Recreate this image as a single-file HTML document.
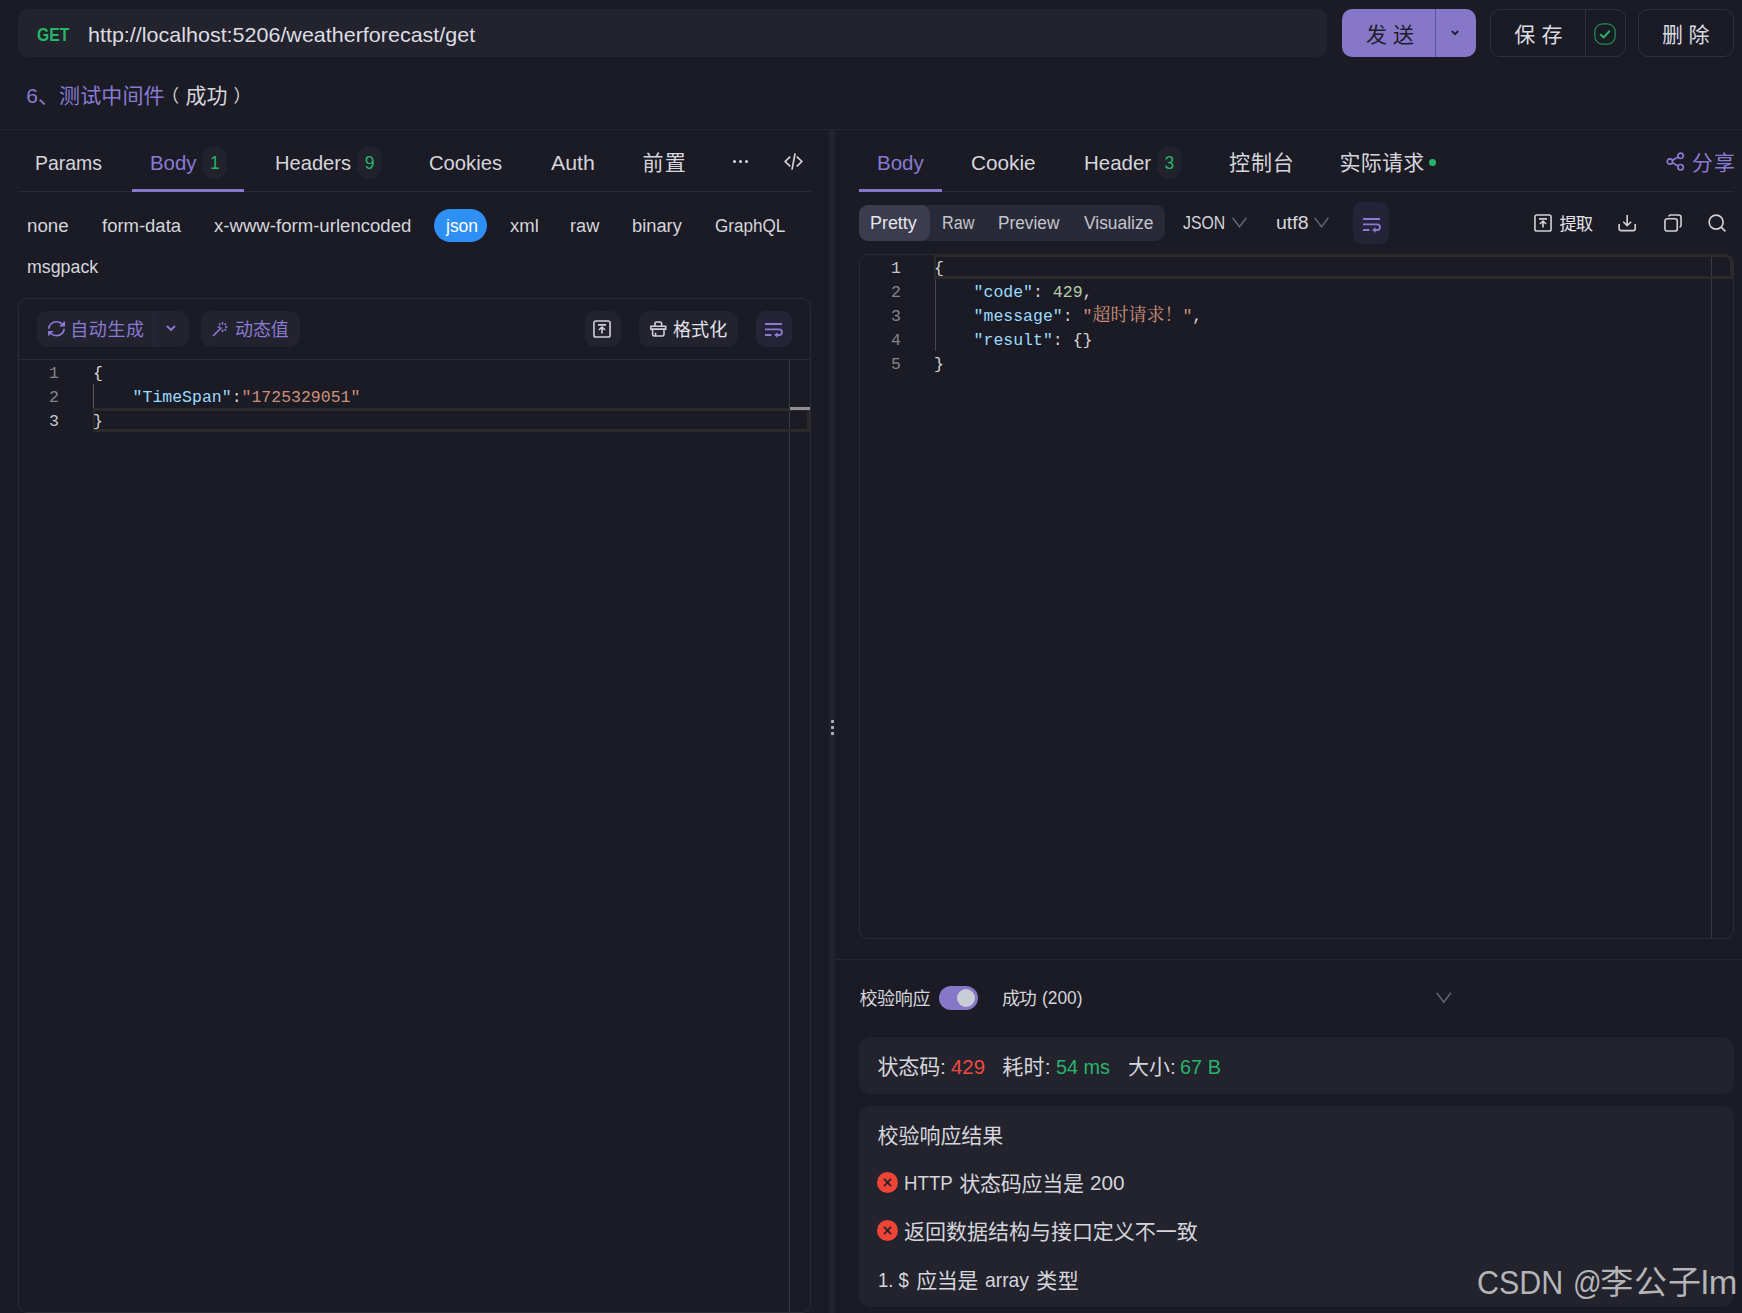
<!DOCTYPE html>
<html lang="zh-CN"><head><meta charset="utf-8"><title>Apifox</title>
<style>
html,body{margin:0;padding:0;background:#1b1b25;}
body{width:1742px;height:1313px;position:relative;overflow:hidden;font-family:"Liberation Sans", "Noto Sans CJK SC", sans-serif;}
.t{position:absolute;white-space:pre;transform-origin:0 0;}
.b{position:absolute;box-sizing:border-box;}
.c{position:absolute;white-space:pre;font-family:"Liberation Mono", "Noto Serif CJK SC", monospace;font-size:16.5px;line-height:24px;height:24px;color:#d4d4d4;}
svg{position:absolute;overflow:visible;}
</style></head><body>
<!-- top bar -->
<div class="b" style="left:18px;top:9px;width:1309px;height:48px;border-radius:9px;background:#23232e;"></div>
<div class="b" style="left:1342px;top:9px;width:134px;height:48px;border-radius:10px;background:#8777c9;"></div>
<div class="b" style="left:1435px;top:9px;width:1px;height:48px;background:#5f5399;"></div>
<svg style="left:1451px;top:30px;" width="8" height="6" viewBox="0 0 8 6"><path d="M0.8 1 L4 4.2 L7.2 1" fill="none" stroke="#1e1e2a" stroke-width="1.8"/></svg>
<div class="b" style="left:1490px;top:9px;width:136px;height:48px;border-radius:10px;border:1px solid #30303c;"></div>
<div class="b" style="left:1585px;top:10px;width:1px;height:46px;background:#30303c;"></div>
<svg style="left:1594px;top:23px;" width="22" height="22" viewBox="0 0 22 22"><rect x="0.8" y="0.8" width="20.4" height="20.4" rx="8" fill="none" stroke="#1f9150" stroke-width="1.2"/><path d="M6.2 11.2 L9.6 14.4 L15.8 7.8" fill="none" stroke="#27b56b" stroke-width="2"/></svg>
<div class="b" style="left:1638px;top:9px;width:96px;height:48px;border-radius:10px;border:1px solid #30303c;"></div>
<!-- header line -->
<div class="b" style="left:0;top:129px;width:1742px;height:1px;background:#24242e;"></div>
<!-- splitter -->
<div class="b" style="left:829px;top:130px;width:6px;height:1183px;background:#23232e;"></div>
<div class="b" style="left:831px;top:720px;width:3px;height:3px;border-radius:1px;background:#b4b4bc;"></div>
<div class="b" style="left:831px;top:726px;width:3px;height:3px;border-radius:1px;background:#b4b4bc;"></div>
<div class="b" style="left:831px;top:732px;width:3px;height:3px;border-radius:1px;background:#b4b4bc;"></div>

<!-- left tabs -->
<div class="b" style="left:18px;top:191px;width:793px;height:1px;background:#2a2a36;"></div>
<div class="b" style="left:132px;top:189px;width:112px;height:3px;background:#8777c9;"></div>
<div class="b" style="left:203px;top:146px;width:24px;height:33px;border-radius:12px;background:#22222c;"></div>
<div class="b" style="left:357px;top:146px;width:24px;height:33px;border-radius:12px;background:#22222c;"></div>
<div class="b" style="left:732.6px;top:159.8px;width:3.4px;height:3.4px;border-radius:1.5px;background:#d9d9df;"></div>
<div class="b" style="left:738.7px;top:159.8px;width:3.4px;height:3.4px;border-radius:1.5px;background:#d9d9df;"></div>
<div class="b" style="left:744.8px;top:159.8px;width:3.4px;height:3.4px;border-radius:1.5px;background:#d9d9df;"></div>
<svg style="left:783px;top:152px;" width="22" height="19" viewBox="0 0 22 19"><path d="M7.2 4.6 L2.2 9.5 L7.2 14.4 M13.8 4.6 L18.8 9.5 L13.8 14.4 M12.1 1.4 L9 17.6" fill="none" stroke="#d4d4da" stroke-width="1.7"/></svg>
<!-- json pill -->
<div class="b" style="left:434px;top:209px;width:53px;height:33px;border-radius:17px;background:#2e8ff5;"></div>

<!-- left editor box -->
<div class="b" style="left:18px;top:298px;width:793px;height:1015px;border-radius:9px;border:1px solid #2b2b34;"></div>
<div class="b" style="left:19px;top:359px;width:791px;height:1px;background:#2a2a36;"></div>
<div class="b" style="left:37px;top:311px;width:152px;height:36px;border-radius:10px;background:#23232f;"></div>
<div class="b" style="left:153px;top:311px;width:1px;height:36px;background:#2b2940;"></div>
<div class="b" style="left:201px;top:311px;width:99px;height:36px;border-radius:10px;background:#23232f;"></div>
<div class="b" style="left:585px;top:311px;width:36px;height:36px;border-radius:10px;background:#23232f;"></div>
<div class="b" style="left:639px;top:311px;width:99px;height:36px;border-radius:10px;background:#23232f;"></div>
<div class="b" style="left:756px;top:311px;width:36px;height:36px;border-radius:10px;background:#252338;"></div>
<!-- refresh icon -->
<svg style="left:48.4px;top:321.3px;" width="17" height="15.4" viewBox="2 2 20 20" preserveAspectRatio="none"><path d="M3 12a9 9 0 0 1 9-9 9.75 9.75 0 0 1 6.74 2.74L21 8 M21 3v5h-5 M21 12a9 9 0 0 1-9 9 9.75 9.75 0 0 1-6.74-2.74L3 16 M8 16H3v5" fill="none" stroke="#897ad2" stroke-width="2.1"/></svg>
<svg style="left:166px;top:325px;" width="10" height="7" viewBox="0 0 10 7"><path d="M1 1 L5 5 L9 1" fill="none" stroke="#897ad2" stroke-width="1.8"/></svg>
<!-- wand icon -->
<svg style="left:212px;top:321px;" width="16" height="16" viewBox="0 0 16 16"><path d="M1 15 L9.5 6.5 M10.5 1 V3.4 M10.5 8.6 V11 M5.6 6 H8 M13 6 H15.4 M7 2.5 L8.4 3.9 M12.6 8.1 L14 9.5 M14 2.5 L12.6 3.9" fill="none" stroke="#897ad2" stroke-width="1.6"/></svg>
<!-- upload icon -->
<svg style="left:593.4px;top:319.8px;" width="18" height="18" viewBox="0 0 19 19"><rect x="1" y="1" width="17" height="17" rx="2" fill="none" stroke="#d0d0d6" stroke-width="1.7"/><path d="M5.2 5.2 H13.8 M9.5 14.2 V7.6 M6.2 10.6 L9.5 7.4 L12.8 10.6" fill="none" stroke="#d0d0d6" stroke-width="1.7"/></svg>
<!-- format icon -->
<svg style="left:649.6px;top:321.4px;" width="16.6" height="16" viewBox="0 0 18 17" preserveAspectRatio="none"><path d="M5.4 5.4 V2.6 Q5.4 1 7 1 H11 Q12.6 1 12.6 2.6 V5.4 M1 5.6 H17 V8.6 H1 Z M2.8 8.8 V14.4 Q2.8 16 4.4 16 H13.6 Q15.2 16 15.2 14.4 V8.8 M6 16 V12.6" fill="none" stroke="#d0d0d6" stroke-width="1.7"/></svg>
<!-- wrap icon -->
<svg style="left:764px;top:322px;" width="19" height="16" viewBox="0 0 19 16"><path d="M1 2 H18 M1 7.4 H15 Q18 7.4 18 10.2 Q18 13 15 13 H11.6 M1 13 H7.4" fill="none" stroke="#897ad2" stroke-width="1.8"/><path d="M13.6 10.2 L10 13 L13.6 15.8 Z" fill="#897ad2"/></svg>

<!-- left code -->
<div class="b" style="left:789px;top:360px;width:1px;height:951px;background:#38383f;"></div>
<div class="b" style="left:93px;top:408px;width:717px;height:24px;border:3px solid #2a2a2a;border-left-width:2px;"></div>
<div class="b" style="left:93px;top:384px;width:1px;height:24px;background:#5a5a5f;"></div>
<div class="b" style="left:790px;top:407px;width:20px;height:3px;background:#8f8f94;"></div>
<span class="c" style="left:28px;top:362px;width:31px;text-align:right;color:#858585;">1</span>
<span class="c" style="left:28px;top:386px;width:31px;text-align:right;color:#858585;">2</span>
<span class="c" style="left:28px;top:410px;width:31px;text-align:right;color:#c6c6c6;">3</span>
<span class="c" style="left:93px;top:362px;">{</span>
<span class="c" style="left:93px;top:386px;">    <span style="color:#9cdcfe">"TimeSpan"</span>:<span style="color:#ce9178">"1725329051"</span></span>
<span class="c" style="left:93px;top:410px;">}</span>

<!-- right tabs -->
<div class="b" style="left:859px;top:191px;width:875px;height:1px;background:#2a2a36;"></div>
<div class="b" style="left:859px;top:189px;width:83px;height:3px;background:#8777c9;"></div>
<div class="b" style="left:1157px;top:146px;width:24px;height:33px;border-radius:12px;background:#22222c;"></div>
<div class="b" style="left:1429px;top:158.5px;width:7px;height:7px;border-radius:4px;background:#27b56b;"></div>
<!-- share icon -->
<svg style="left:1666px;top:152px;" width="19" height="19" viewBox="0 0 19 19"><circle cx="14.6" cy="3.8" r="2.7" fill="none" stroke="#897ad2" stroke-width="1.7"/><circle cx="3.9" cy="9.5" r="2.7" fill="none" stroke="#897ad2" stroke-width="1.7"/><circle cx="14.6" cy="15.2" r="2.7" fill="none" stroke="#897ad2" stroke-width="1.7"/><path d="M6.3 8.2 L12.2 5.1 M6.3 10.8 L12.2 13.9" fill="none" stroke="#897ad2" stroke-width="1.7"/></svg>

<!-- segmented -->
<div class="b" style="left:859px;top:205px;width:306px;height:36px;border-radius:9px;background:#292a38;"></div>
<div class="b" style="left:859px;top:205px;width:71px;height:36px;border-radius:9px;background:#3b3c4e;"></div>
<svg style="left:1231.5px;top:217.3px;" width="15" height="11" viewBox="0 0 15 11"><path d="M0.6 0.8 L7.5 9.8 L14.4 0.8" fill="none" stroke="#62646f" stroke-width="1.5"/></svg>
<svg style="left:1314.4px;top:217.3px;" width="15" height="11" viewBox="0 0 15 11"><path d="M0.6 0.8 L7.5 9.8 L14.4 0.8" fill="none" stroke="#62646f" stroke-width="1.5"/></svg>
<div class="b" style="left:1353px;top:202px;width:36px;height:41.5px;border-radius:9px;background:#252338;"></div>
<svg style="left:1362px;top:216.5px;" width="19" height="16" viewBox="0 0 19 16"><path d="M1 2 H18 M1 7.4 H15 Q18 7.4 18 10.2 Q18 13 15 13 H11.6 M1 13 H7.4" fill="none" stroke="#897ad2" stroke-width="1.8"/><path d="M13.6 10.2 L10 13 L13.6 15.8 Z" fill="#897ad2"/></svg>
<!-- extract icon -->
<svg style="left:1533.6px;top:214.4px;" width="18" height="18" viewBox="0 0 19 19"><rect x="1" y="1" width="17" height="17" rx="2" fill="none" stroke="#d0d0d6" stroke-width="1.7"/><path d="M5.2 5.2 H13.8 M9.5 14.2 V7.6 M6.2 10.6 L9.5 7.4 L12.8 10.6" fill="none" stroke="#d0d0d6" stroke-width="1.7"/></svg>
<!-- download icon -->
<svg style="left:1618.2px;top:213.8px;" width="18.4" height="18" viewBox="0 0 19 19" preserveAspectRatio="none"><path d="M1.2 10.6 V15.4 Q1.2 17.6 3.4 17.6 H15.6 Q17.8 17.6 17.8 15.4 V10.6 M9.5 1 V12 M5.4 8.2 L9.5 12.2 L13.6 8.2" fill="none" stroke="#d0d0d6" stroke-width="1.7"/></svg>
<!-- copy icon -->
<svg style="left:1663.5px;top:213.6px;" width="18" height="18" viewBox="0 0 19 19"><rect x="1" y="5" width="13" height="13" rx="2.5" fill="none" stroke="#d0d0d6" stroke-width="1.7"/><path d="M5 2.6 Q5.4 1 7 1 H15.4 Q18 1 18 3.6 V12 Q18 13.6 16.4 14" fill="none" stroke="#d0d0d6" stroke-width="1.7"/></svg>
<!-- search icon -->
<svg style="left:1708.2px;top:213.6px;" width="18.4" height="18.4" viewBox="0 0 19 19"><circle cx="8.4" cy="8.4" r="7.2" fill="none" stroke="#d0d0d6" stroke-width="1.7"/><path d="M13.6 13.6 L18 18" fill="none" stroke="#d0d0d6" stroke-width="1.7"/></svg>

<!-- right editor -->
<div class="b" style="left:859px;top:254px;width:875px;height:685px;border-radius:9px;border:1px solid #2b2b34;"></div>
<div class="b" style="left:1711px;top:255px;width:1px;height:683px;background:#38383f;"></div>
<div class="b" style="left:934px;top:254px;width:799px;height:25px;border:3px solid #2a2a2a;border-left-width:2px;border-top-right-radius:9px;"></div>
<div class="b" style="left:934.5px;top:279px;width:1px;height:72px;background:#45454b;"></div>
<span class="c" style="left:870px;top:257px;width:31px;text-align:right;color:#c6c6c6;">1</span>
<span class="c" style="left:870px;top:281px;width:31px;text-align:right;color:#858585;">2</span>
<span class="c" style="left:870px;top:305px;width:31px;text-align:right;color:#858585;">3</span>
<span class="c" style="left:870px;top:329px;width:31px;text-align:right;color:#858585;">4</span>
<span class="c" style="left:870px;top:353px;width:31px;text-align:right;color:#858585;">5</span>
<span class="c" style="left:934px;top:257px;">{</span>
<span class="c" style="left:934px;top:281px;">    <span style="color:#9cdcfe">"code"</span>: <span style="color:#b5cea8">429</span>,</span>
<span class="c" style="left:934px;top:305px;">    <span style="color:#9cdcfe">"message"</span>: <span style="color:#ce9178">"<span style="font-size:18px;line-height:0;">超时请求！</span>"</span>,</span>
<span class="c" style="left:934px;top:329px;">    <span style="color:#9cdcfe">"result"</span>: {}</span>
<span class="c" style="left:934px;top:353px;">}</span>

<!-- bottom -->
<div class="b" style="left:835px;top:959px;width:907px;height:1px;background:#25252f;"></div>
<div class="b" style="left:939px;top:986px;width:39px;height:24px;border-radius:12px;background:#8777c9;"></div>
<div class="b" style="left:957px;top:989px;width:18px;height:18px;border-radius:9px;background:#c9ced6;"></div>
<svg style="left:1436.2px;top:992px;" width="15.6" height="11.4" viewBox="0 0 15.6 11.4"><path d="M0.7 0.8 L7.8 10.2 L14.9 0.8" fill="none" stroke="#62646f" stroke-width="1.6"/></svg>
<div class="b" style="left:859px;top:1037px;width:875px;height:57px;border-radius:12px;background:#23232e;"></div>
<div class="b" style="left:859px;top:1106px;width:875px;height:201px;border-radius:12px;background:#23232e;"></div>
<svg style="left:877px;top:1172px;" width="21" height="21" viewBox="0 0 21 21"><circle cx="10.5" cy="10.5" r="10.5" fill="#ef4537"/><path d="M7 6.9 L14 14.1 M14 6.9 L7 14.1" fill="none" stroke="#23232e" stroke-width="1.6"/></svg>
<svg style="left:877px;top:1220px;" width="21" height="21" viewBox="0 0 21 21"><circle cx="10.5" cy="10.5" r="10.5" fill="#ef4537"/><path d="M7 6.9 L14 14.1 M14 6.9 L7 14.1" fill="none" stroke="#23232e" stroke-width="1.6"/></svg>

<span class="t" style="left:37.40px;top:26.70px;font-size:17.84px;line-height:17.84px;color:#25b869;transform:scaleX(0.8787);font-weight:700;">GET</span>
<span class="t" style="left:87.68px;top:24.22px;font-size:21.0px;line-height:21.0px;color:#dcdce2;transform:scaleX(1.0236);">http://localhost:5206/weatherforecast/get</span>
<span class="t" style="left:1366.00px;top:24.22px;font-size:21px;line-height:21px;color:#1e1e2a;">发</span>
<span class="t" style="left:1393.00px;top:24.22px;font-size:21px;line-height:21px;color:#1e1e2a;">送</span>
<span class="t" style="left:1514.30px;top:24.22px;font-size:21px;line-height:21px;color:#dcdce2;">保</span>
<span class="t" style="left:1541.50px;top:24.22px;font-size:21px;line-height:21px;color:#dcdce2;">存</span>
<span class="t" style="left:1662.00px;top:24.22px;font-size:21px;line-height:21px;color:#dcdce2;">删</span>
<span class="t" style="left:1688.50px;top:24.22px;font-size:21px;line-height:21px;color:#dcdce2;">除</span>
<span class="t" style="left:26.20px;top:85.02px;font-size:21px;line-height:21px;color:#897ad2;letter-spacing:0.104px;">6、测试中间件</span>
<span class="t" style="left:185.50px;top:85.02px;font-size:21px;line-height:21px;color:#d6d6dc;">成功</span>
<span class="t" style="left:161.60px;top:88.29px;font-size:17.5px;line-height:17.5px;color:#d6d6dc;">（</span>
<span class="t" style="left:233.60px;top:88.29px;font-size:17.5px;line-height:17.5px;color:#d6d6dc;">）</span>
<span class="t" style="left:35.25px;top:152.67px;font-size:20.47px;line-height:20.47px;color:#d5d5db;transform:scaleX(0.9503);">Params</span>
<span class="t" style="left:150.00px;top:152.67px;font-size:20.47px;line-height:20.47px;color:#897ad2;transform:scaleX(0.9959);">Body</span>
<span class="t" style="left:210.05px;top:155.14px;font-size:17.55px;line-height:17.55px;color:#27b46a;transform:scaleX(1.0000);">1</span>
<span class="t" style="left:275.02px;top:152.67px;font-size:20.47px;line-height:20.47px;color:#d5d5db;transform:scaleX(0.9832);">Headers</span>
<span class="t" style="left:364.75px;top:155.14px;font-size:17.55px;line-height:17.55px;color:#27b46a;transform:scaleX(1.0000);">9</span>
<span class="t" style="left:428.81px;top:152.67px;font-size:20.47px;line-height:20.47px;color:#d5d5db;transform:scaleX(0.9881);">Cookies</span>
<span class="t" style="left:551.00px;top:152.67px;font-size:20.47px;line-height:20.47px;color:#d5d5db;transform:scaleX(1.0408);">Auth</span>
<span class="t" style="left:642.40px;top:152.22px;font-size:21px;line-height:21px;color:#d5d5db;letter-spacing:1.400px;">前置</span>
<span class="t" style="left:27.33px;top:218.14px;font-size:17.55px;line-height:17.55px;color:#d5d5db;transform:scaleX(1.0685);">none</span>
<span class="t" style="left:102.00px;top:218.14px;font-size:17.55px;line-height:17.55px;color:#d5d5db;transform:scaleX(1.0535);">form-data</span>
<span class="t" style="left:214.00px;top:218.14px;font-size:17.55px;line-height:17.55px;color:#d5d5db;transform:scaleX(1.0609);">x-www-form-urlencoded</span>
<span class="t" style="left:445.50px;top:218.14px;font-size:17.55px;line-height:17.55px;color:#ffffff;transform:scaleX(0.9966);">json</span>
<span class="t" style="left:510.00px;top:218.14px;font-size:17.55px;line-height:17.55px;color:#d5d5db;transform:scaleX(1.0543);">xml</span>
<span class="t" style="left:569.96px;top:218.14px;font-size:17.55px;line-height:17.55px;color:#d5d5db;transform:scaleX(1.0403);">raw</span>
<span class="t" style="left:631.96px;top:218.14px;font-size:17.55px;line-height:17.55px;color:#d5d5db;transform:scaleX(1.0429);">binary</span>
<span class="t" style="left:715.00px;top:218.14px;font-size:17.55px;line-height:17.55px;color:#d5d5db;transform:scaleX(0.9757);">GraphQL</span>
<span class="t" style="left:27.39px;top:259.14px;font-size:17.55px;line-height:17.55px;color:#d5d5db;transform:scaleX(1.0146);">msgpack</span>
<span class="t" style="left:70.30px;top:320.96px;font-size:18px;line-height:18px;color:#897ad2;letter-spacing:0.567px;">自动生成</span>
<span class="t" style="left:235.00px;top:320.96px;font-size:18px;line-height:18px;color:#897ad2;letter-spacing:-0.100px;">动态值</span>
<span class="t" style="left:673.00px;top:320.96px;font-size:18px;line-height:18px;color:#e2e2e8;letter-spacing:0.100px;">格式化</span>
<span class="t" style="left:876.50px;top:152.67px;font-size:20.47px;line-height:20.47px;color:#897ad2;transform:scaleX(1.0023);">Body</span>
<span class="t" style="left:971.29px;top:152.67px;font-size:20.47px;line-height:20.47px;color:#d5d5db;transform:scaleX(1.0146);">Cookie</span>
<span class="t" style="left:1084.00px;top:152.67px;font-size:20.47px;line-height:20.47px;color:#d5d5db;transform:scaleX(1.0004);">Header</span>
<span class="t" style="left:1164.45px;top:155.14px;font-size:17.55px;line-height:17.55px;color:#27b46a;transform:scaleX(1.0000);">3</span>
<span class="t" style="left:1229.00px;top:152.22px;font-size:21px;line-height:21px;color:#d5d5db;letter-spacing:0.900px;">控制台</span>
<span class="t" style="left:1339.50px;top:152.22px;font-size:21px;line-height:21px;color:#d5d5db;letter-spacing:0.233px;">实际请求</span>
<span class="t" style="left:1691.80px;top:152.22px;font-size:21px;line-height:21px;color:#897ad2;letter-spacing:1.200px;">分享</span>
<span class="t" style="left:870.48px;top:214.84px;font-size:17.55px;line-height:17.55px;color:#e6e6ec;transform:scaleX(1.0217);">Pretty</span>
<span class="t" style="left:941.58px;top:214.84px;font-size:17.55px;line-height:17.55px;color:#c4c4cc;transform:scaleX(0.9241);">Raw</span>
<span class="t" style="left:997.92px;top:214.84px;font-size:17.55px;line-height:17.55px;color:#c4c4cc;transform:scaleX(0.9839);">Preview</span>
<span class="t" style="left:1084.00px;top:214.84px;font-size:17.55px;line-height:17.55px;color:#c4c4cc;transform:scaleX(0.9929);">Visualize</span>
<span class="t" style="left:1182.80px;top:214.84px;font-size:17.55px;line-height:17.55px;color:#d5d5db;transform:scaleX(0.9025);">JSON</span>
<span class="t" style="left:1275.89px;top:214.84px;font-size:17.55px;line-height:17.55px;color:#d5d5db;transform:scaleX(1.1131);">utf8</span>
<span class="t" style="left:1559.50px;top:216.16px;font-size:17.3px;line-height:17.3px;color:#e2e2e8;letter-spacing:-0.981px;">提取</span>
<span class="t" style="left:859.40px;top:989.76px;font-size:18px;line-height:18px;color:#d5d5db;letter-spacing:-0.333px;">校验响应</span>
<span class="t" style="left:1002.00px;top:989.76px;font-size:18px;line-height:18px;color:#d5d5db;letter-spacing:-1.200px;">成功</span>
<span class="t" style="left:1042.31px;top:989.64px;font-size:17.55px;line-height:17.55px;color:#d5d5db;transform:scaleX(0.9901);">(200)</span>
<span class="t" style="left:877.50px;top:1056.22px;font-size:21px;line-height:21px;color:#d5d5db;letter-spacing:-0.167px;">状态码:</span>
<span class="t" style="left:950.60px;top:1056.67px;font-size:20.47px;line-height:20.47px;color:#f04a3e;transform:scaleX(0.9956);">429</span>
<span class="t" style="left:1002.20px;top:1056.22px;font-size:21px;line-height:21px;color:#d5d5db;letter-spacing:0.250px;">耗时:</span>
<span class="t" style="left:1055.70px;top:1056.67px;font-size:20.47px;line-height:20.47px;color:#27b46a;transform:scaleX(0.9681);">54 ms</span>
<span class="t" style="left:1128.00px;top:1056.22px;font-size:21px;line-height:21px;color:#d5d5db;">大小:</span>
<span class="t" style="left:1180.03px;top:1056.67px;font-size:20.47px;line-height:20.47px;color:#27b46a;transform:scaleX(0.9720);">67 B</span>
<span class="t" style="left:877.50px;top:1125.22px;font-size:21px;line-height:21px;color:#d5d5db;letter-spacing:-0.040px;">校验响应结果</span>
<span class="t" style="left:904.19px;top:1173.37px;font-size:20.47px;line-height:20.47px;color:#d5d5db;transform:scaleX(0.9139);">HTTP</span>
<span class="t" style="left:959.30px;top:1172.92px;font-size:21px;line-height:21px;color:#d5d5db;letter-spacing:-0.260px;">状态码应当是</span>
<span class="t" style="left:1089.99px;top:1173.37px;font-size:20.47px;line-height:20.47px;color:#d5d5db;transform:scaleX(1.0137);">200</span>
<span class="t" style="left:904.00px;top:1220.92px;font-size:21px;line-height:21px;color:#d5d5db;letter-spacing:-0.015px;">返回数据结构与接口定义不一致</span>
<span class="t" style="left:877.80px;top:1270.27px;font-size:20.47px;line-height:20.47px;color:#d5d5db;transform:scaleX(0.9040);">1. $</span>
<span class="t" style="left:916.20px;top:1269.82px;font-size:21px;line-height:21px;color:#d5d5db;letter-spacing:-0.500px;">应当是</span>
<span class="t" style="left:985.20px;top:1270.27px;font-size:20.47px;line-height:20.47px;color:#d5d5db;transform:scaleX(0.9436);">array</span>
<span class="t" style="left:1036.30px;top:1269.82px;font-size:21px;line-height:21px;color:#d5d5db;letter-spacing:0.400px;">类型</span>
<span class="t" style="left:1476.88px;top:1265.77px;font-size:33px;line-height:33px;color:rgba(222,222,222,0.78);transform:scaleX(0.9220);">CSDN</span>
<span class="t" style="left:1572.69px;top:1265.77px;font-size:33px;line-height:33px;color:rgba(222,222,222,0.78);transform:scaleX(0.8552);">@</span>
<span class="t" style="left:1600.20px;top:1266.27px;font-size:33px;line-height:33px;color:rgba(222,222,222,0.78);letter-spacing:0.900px;">李公子</span>
<span class="t" style="left:1701.42px;top:1265.77px;font-size:33px;line-height:33px;color:rgba(222,222,222,0.78);transform:scaleX(1.0405);">lm</span>
</body></html>
